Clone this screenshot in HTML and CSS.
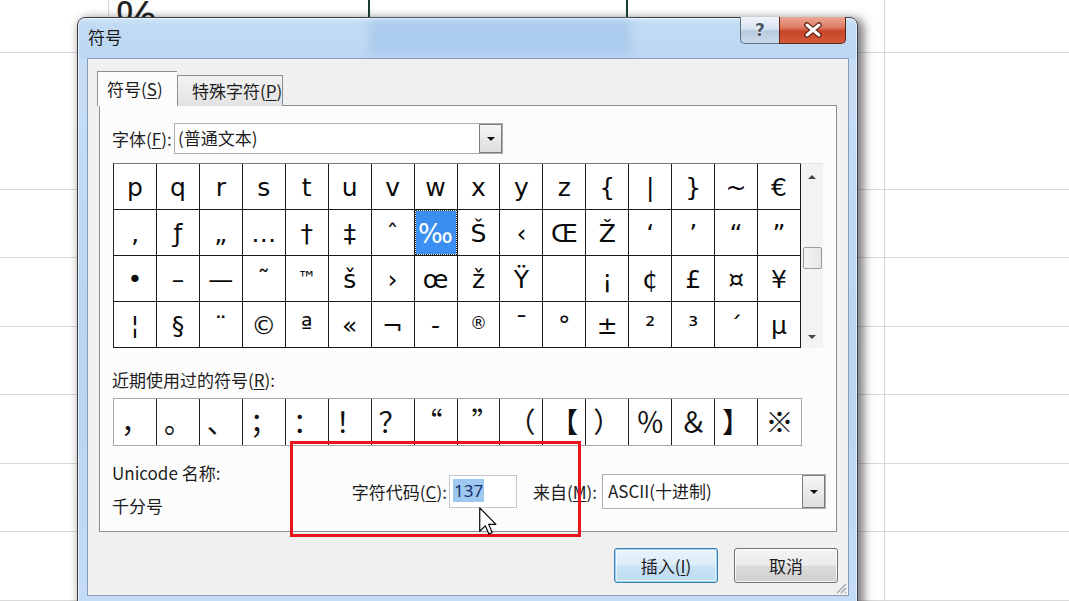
FILE: index.html
```html
<!DOCTYPE html>
<html lang="zh-CN">
<head>
<meta charset="utf-8">
<title>符号</title>
<link rel="stylesheet" href="styles.css">
</head>
<body>
<div class="bgclip"><span class="bgtext">%</span></div>

<div class="window">
  <div class="glassblur"></div>
  <div class="titlebar">
    <div class="title">符号</div>
    <div class="controls">
      <div class="btn-help">?</div>
      <div class="btn-close">
        <svg width="22" height="16" viewBox="0 0 22 16"><path d="M5 3 L17 13 M17 3 L5 13" stroke="#5b2014" stroke-width="5.5" stroke-linecap="round"/><path d="M5 3 L17 13 M17 3 L5 13" stroke="#fff" stroke-width="3" stroke-linecap="round"/></svg>
      </div>
    </div>
  </div>

  <div class="client">
    <div class="tabs">
      <div class="tab active">符号(<u>S</u>)</div>
      <div class="tab">特殊字符(<u>P</u>)</div>
    </div>
    <div class="panel">
      <div class="fontrow">
        <span class="lbl fontlbl">字体(<u>F</u>):</span>
        <div class="combo fontcombo">
          <span class="combotext">(普通文本)</span>
          <span class="dropbtn"><span class="tri"></span></span>
        </div>
      </div>

      <div class="gridwrap">
        <div class="grid">
          <div class="c">p</div><div class="c">q</div><div class="c">r</div><div class="c">s</div><div class="c">t</div><div class="c">u</div><div class="c">v</div><div class="c">w</div><div class="c">x</div><div class="c">y</div><div class="c">z</div><div class="c">{</div><div class="c">|</div><div class="c">}</div><div class="c">~</div><div class="c">€</div>
          <div class="c">‚</div><div class="c">ƒ</div><div class="c">„</div><div class="c">…</div><div class="c">†</div><div class="c">‡</div><div class="c">ˆ</div><div class="c sel"><span>‰</span></div><div class="c">Š</div><div class="c">‹</div><div class="c">Œ</div><div class="c">Ž</div><div class="c">‘</div><div class="c">’</div><div class="c">“</div><div class="c">”</div>
          <div class="c">•</div><div class="c">–</div><div class="c">—</div><div class="c">˜</div><div class="c tm">™</div><div class="c">š</div><div class="c">›</div><div class="c">œ</div><div class="c">ž</div><div class="c">Ÿ</div><div class="c">&nbsp;</div><div class="c">¡</div><div class="c">¢</div><div class="c">£</div><div class="c">¤</div><div class="c">¥</div>
          <div class="c">¦</div><div class="c">§</div><div class="c">¨</div><div class="c">©</div><div class="c">ª</div><div class="c">«</div><div class="c">¬</div><div class="c">-</div><div class="c sm">®</div><div class="c">¯</div><div class="c">°</div><div class="c">±</div><div class="c">²</div><div class="c">³</div><div class="c">´</div><div class="c">µ</div>
        </div>
        <div class="vscroll">
          <span class="arr up"></span>
          <span class="thumb"></span>
          <span class="arr down"></span>
        </div>
      </div>

      <div class="lbl recentlbl">近期使用过的符号(<u>R</u>):</div>
      <div class="recent">
        <div class="r">，</div><div class="r">。</div><div class="r">、</div><div class="r">；</div><div class="r">：</div><div class="r">！</div><div class="r">？</div><div class="r"><span class="shl">“</span></div><div class="r"><span class="shr">”</span></div><div class="r">（</div><div class="r">【</div><div class="r">）</div><div class="r">％</div><div class="r">＆</div><div class="r">】</div><div class="r">※</div>
      </div>

      <div class="bottomrow">
        <div class="namecol">
          <div class="lbl">Unicode 名称:</div>
          <div class="lbl name">千分号</div>
        </div>
        <div class="codegroup">
          <span class="lbl">字符代码(<u>C</u>):</span>
          <div class="codeinput"><span class="hl">137</span></div>
          <span class="lbl fromlbl">来自(<u>M</u>):</span>
          <div class="combo fromcombo">
            <span class="combotext">ASCII(十进制)</span>
            <span class="dropbtn"><span class="tri"></span></span>
          </div>
        </div>
      </div>
    </div>

    <div class="buttons">
      <div class="btn default">插入(<u>I</u>)</div>
      <div class="btn">取消</div>
    </div>

    <svg class="grip" width="12" height="12" viewBox="0 0 12 12"><path d="M11 2 L2 11 M11 6 L6 11 M11 10 L10 11" stroke="#9aa3ad" stroke-width="1.2"/></svg>
  </div>
</div>

<div class="redbox"></div>

<svg class="cursor" width="19" height="28" viewBox="0 0 13 19"><path d="M0.5 0.5 L0.5 16.5 L4.3 12.8 L6.8 18.4 L9 17.4 L6.6 11.8 L11.6 11.8 Z" fill="#fff" stroke="#000" stroke-width="0.8" stroke-linejoin="round"/></svg>
</body>
</html>
```

FILE: styles.css
```css
* { box-sizing: border-box; margin: 0; padding: 0; }

html, body { width: 1069px; height: 601px; overflow: hidden; }

body {
  position: relative;
  font-family: "Noto Sans CJK SC", "Noto Sans", sans-serif;
  font-size: 17px;
  color: #1c1c1c;
  background-color: #fff;
  background-image:
    linear-gradient(to right, transparent 108px, #d6d6d6 108px, #d6d6d6 109px, transparent 109px),
    linear-gradient(to right, transparent 368px, #15402a 368px, #15402a 370px, transparent 370px),
    linear-gradient(to right, transparent 626px, #15402a 626px, #15402a 628px, transparent 628px),
    linear-gradient(to right, transparent 884px, #d6d6d6 884px, #d6d6d6 885px, transparent 885px),
    repeating-linear-gradient(to bottom, transparent 0, transparent 52px, #d9d9d9 52px, #d9d9d9 53px, transparent 53px, transparent 68.5px);
}

u { text-decoration: underline; text-underline-offset: 2px; text-decoration-thickness: 1px; }

.bgclip {
  position: absolute;
  left: 112px;
  top: 0;
  width: 60px;
  height: 17px;
  overflow: hidden;
}

.bgtext {
  display: block;
  height: 23px;
  overflow: hidden;
  margin: -6px 0 0 4px;
  font-family: "Liberation Sans", sans-serif;
  font-size: 46px;
  line-height: 46px;
  color: #222;
}

/* window frame */
.window {
  position: absolute;
  left: 77px;
  top: 17px;
  width: 781px;
  height: 586px;
  border: 1px solid #3c4148;
  border-radius: 8px 8px 0 0;
  background: linear-gradient(to bottom, #d3e6f9 0, #c2dbf4 6px, #bcd7f3 40px, #c6def6 41px, #b9d4f0 60%, #c4dcf5 100%);
  box-shadow: 4px 3px 10px 2px rgba(0, 0, 0, .5), inset 0 0 0 1px rgba(255, 255, 255, .55);
  padding: 0 8px 6px 9px;
  display: flex;
  flex-direction: column;
}

.glassblur {
  position: absolute;
  left: 291px;
  top: 2px;
  width: 262px;
  height: 36px;
  background: #a6c8ec;
  filter: blur(4px);
  opacity: .75;
}

.titlebar {
  position: relative;
  height: 40px;
  display: flex;
  align-items: flex-start;
}

.title {
  margin-top: 9px;
  margin-left: 1px;
  line-height: 20px;
  font-size: 17px;
  color: #1a1a1a;
}

.controls {
  margin-left: auto;
  margin-right: 3px;
  margin-top: -1px;
  display: flex;
}

.btn-help {
  width: 39px;
  height: 27px;
  border: 1px solid #5f6f84;
  border-top: none;
  border-right: none;
  border-radius: 0 0 0 5px;
  background: linear-gradient(to bottom, #eef3fa 0, #d9e4f1 45%, #b8cade 55%, #cbdaea 100%);
  font-family: "DejaVu Sans", sans-serif;
  font-weight: bold;
  font-size: 17px;
  line-height: 26px;
  text-align: center;
  color: #4a5566;
  text-shadow: 0 0 2px #fff, 0 0 1px #fff;
}

.btn-close {
  width: 67px;
  height: 27px;
  border: 1px solid #5d241a;
  border-top: none;
  border-radius: 0 0 5px 0;
  background: linear-gradient(to bottom, #eaa897 0, #de7a62 40%, #c84427 55%, #d35a3c 100%);
  display: flex;
  align-items: center;
  justify-content: center;
}

/* client area */
.client {
  position: relative;
  flex: 1;
  background: #f0f0f0;
  border: 1px solid #8c9cb0;
  display: flex;
  flex-direction: column;
}

.tabs {
  position: relative;
  z-index: 1;
  display: flex;
  align-items: flex-end;
  height: 35px;
  margin: 12px 0 0 9px;
}

.tab {
  height: 31px;
  line-height: 30px;
  font-size: 17px;
  white-space: nowrap;
  text-align: left;
  padding-left: 14px;
  border: 1px solid #8a8e96;
  border-bottom: none;
  background: linear-gradient(to bottom, #f3f3f3, #e2e2e2);
  color: #1c1c1c;
}

.tab.active {
  width: 80px;
  height: 35px;
  line-height: 34px;
  background: #fcfcfc;
  border-right: none;
  padding-left: 9px;
}

.tab:not(.active) { width: 106px; }

.panel {
  margin: -1px 0 0 11px;
  width: 738px;
  height: 427px;
  border: 1px solid #8a8e96;
  background: #fcfcfc;
  padding: 17px 0 0 13px;
  display: flex;
  flex-direction: column;
}

.lbl { line-height: 20px; font-size: 17px; white-space: nowrap; }

.fontrow {
  display: flex;
  align-items: center;
  height: 31px;
}

.fontlbl { width: 62px; margin-left: -1px; }

.combo {
  display: flex;
  align-items: stretch;
  background: #fff;
  border: 1px solid #abadb3;
}

.fontcombo { width: 329px; height: 31px; }

.combotext { flex: 1; padding-left: 3px; line-height: 28px; white-space: nowrap; }

.dropbtn {
  width: 23px;
  border: 1px solid #7d7d7d;
  background: linear-gradient(to bottom, #f6f6f6, #dedede);
  display: flex;
  align-items: center;
  justify-content: center;
}

.tri {
  width: 0; height: 0;
  border-left: 4px solid transparent;
  border-right: 4px solid transparent;
  border-top: 4px solid #111;
}

.gridwrap {
  margin-top: 9px;
  display: flex;
  height: 185px;
}

.grid {
  width: 688px;
  display: grid;
  grid-template-columns: repeat(16, 1fr);
  grid-auto-rows: 46px;
  border-top: 1px solid #7a7a7a;
  border-left: 1px solid #222;
  background: #fff;
}

.c {
  border-right: 1px solid #1a1a1a;
  border-bottom: 1px solid #1a1a1a;
  display: flex;
  align-items: center;
  justify-content: center;
  font-family: "DejaVu Sans", sans-serif;
  font-size: 25px;
  line-height: 1;
  color: #0a0a0a;
  padding-top: 2px;
}

.c.tm { font-size: 19px; align-items: flex-start; padding-top: 13px; }
.c.sm { font-size: 17px; align-items: flex-start; padding-top: 13px; }

.c.sel { padding: 1px; }
.c.sel span {
  width: 100%;
  height: 100%;
  display: flex;
  align-items: center;
  justify-content: center;
  background: #3a8ff0;
  color: #fff;
  outline: 1px dotted #222;
  font-size: 26px;
  padding-top: 3px;
}

.vscroll {
  width: 22px;
  background: #f3f3f3;
  border-top: 1px solid #e2e2e2;
  display: flex;
  flex-direction: column;
  align-items: center;
  position: relative;
}

.arr {
  width: 0; height: 0;
  border-left: 4px solid transparent;
  border-right: 4px solid transparent;
}
.arr.up { border-bottom: 4px solid #444; margin-top: 11px; }
.arr.down { border-top: 4px solid #444; margin-top: auto; margin-bottom: 9px; }

.thumb {
  margin-top: 68px;
  width: 19px;
  height: 22px;
  border: 1px solid #9c9c9c;
  border-radius: 2px;
  background: linear-gradient(to right, #f4f4f4, #e6e6e6);
}

.recentlbl { margin-top: 22px; margin-left: -1px; }

.recent {
  margin-top: 8px;
  width: 689px;
  height: 48px;
  display: grid;
  grid-template-columns: repeat(16, 1fr);
  border: 1px solid #a7a7a7;
  background: #fff;
}

.r {
  border-right: 1px solid #1e1e1e;
  font-family: "Noto Sans CJK SC", sans-serif;
  font-size: 28px;
  line-height: 44px;
  text-align: center;
  color: #111;
}
.r:last-child { border-right: none; }
.shl { display: inline-block; transform: translateX(-7px); }
.shr { display: inline-block; transform: translateX(7px); }

.bottomrow {
  display: flex;
  align-items: flex-start;
}

.namecol {
  margin-top: 17px;
  margin-left: -1px;
  display: flex;
  flex-direction: column;
  gap: 13px;
}

.codegroup {
  margin-left: auto;
  margin-right: 10px;
  margin-top: 28px;
  display: flex;
  align-items: center;
}

.codeinput {
  margin-left: 2px;
  width: 68px;
  height: 33px;
  background: #fff;
  border: 1px solid #c4c6cc;
  padding: 4px 0 0 3px;
  font-family: "Noto Sans", sans-serif;
  font-size: 17px;
  line-height: 22px;
}

.hl { background: #9fc8f0; color: #12306a; padding: 0 1px; }

.fromlbl { margin-left: 16px; }

.fromcombo { margin-left: 5px; width: 224px; height: 35px; }
.fromcombo .combotext { line-height: 32px; padding-left: 5px; }

.buttons {
  margin-top: 16px;
  margin-right: 10px;
  display: flex;
  justify-content: flex-end;
  gap: 16px;
}

.btn {
  width: 104px;
  height: 35px;
  border: 1px solid #707070;
  border-radius: 3px;
  background: linear-gradient(to bottom, #f4f4f4 0, #ebebeb 48%, #dbdbdb 52%, #cfcfcf 100%);
  box-shadow: inset 0 0 0 1px rgba(255, 255, 255, .8);
  text-align: center;
  line-height: 33px;
  font-size: 17px;
  color: #1c1c1c;
}

.btn.default {
  border-color: #3c7fb1;
  box-shadow: inset 0 0 0 1px #9fd2f4, inset 0 0 0 2px rgba(255, 255, 255, .6);
  background: linear-gradient(to bottom, #eaf5fc 0, #dcecf8 48%, #c8e2f5 52%, #bfdcf2 100%);
}

.grip { position: absolute; right: 1px; bottom: 1px; }

/* overlays */
.redbox {
  position: absolute;
  left: 290px;
  top: 441px;
  width: 291px;
  height: 96px;
  border: 3px solid #e8131b;
}

.cursor {
  position: absolute;
  left: 479px;
  top: 507px;
}
```
